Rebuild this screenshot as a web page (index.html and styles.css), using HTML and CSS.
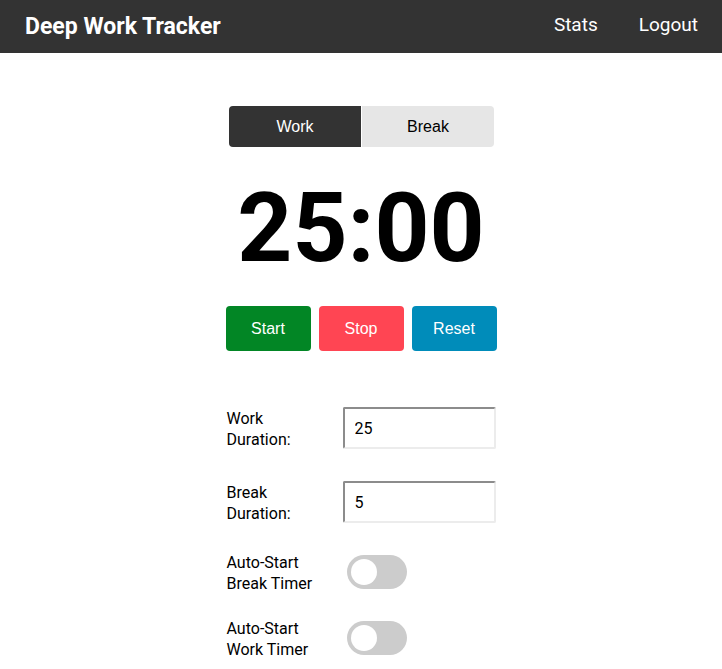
FILE: index.html
```html
<!DOCTYPE html>
<html>
<head>
<meta charset="utf-8">
<link rel="stylesheet" href="styles.css">
</head>
<body>
<header class="topbar">
  <div class="brand">Deep Work Tracker</div>
  <nav class="nav">
    <a class="nav-link" href="#">Stats</a>
    <a class="nav-link" href="#">Logout</a>
  </nav>
</header>
<main class="main">
  <div class="mode-tabs">
    <button class="tab tab-active">Work</button>
    <button class="tab">Break</button>
  </div>
  <div class="timer">25:00</div>
  <div class="controls">
    <button class="ctrl ctrl-start">Start</button>
    <button class="ctrl ctrl-stop">Stop</button>
    <button class="ctrl ctrl-reset">Reset</button>
  </div>
  <div class="settings">
    <div class="row row-input">
      <label class="label">Work<br>Duration:</label>
      <input class="num" type="text" value="25">
    </div>
    <div class="row row-input">
      <label class="label">Break<br>Duration:</label>
      <input class="num" type="text" value="5">
    </div>
    <div class="row">
      <label class="label">Auto-Start<br>Break Timer</label>
      <span class="switch"><span class="knob"></span></span>
    </div>
    <div class="row">
      <label class="label">Auto-Start<br>Work Timer</label>
      <span class="switch"><span class="knob"></span></span>
    </div>
  </div>
</main>
</body>
</html>
```
FILE: styles.css
```css
* { box-sizing: border-box; }
body {
  margin: 0;
  font-family: Roboto, "Liberation Sans", sans-serif;
  color: #000;
  background: #fff;
}
.topbar {
  height: 53px;
  background: #333;
  display: flex;
  align-items: center;
  justify-content: space-between;
  padding: 0 24px 0 25px;
}
.brand {
  color: #fff;
  font-weight: 700;
  font-size: 23px;
}
.nav {
  display: flex;
  gap: 41px;
  margin-bottom: 5px;
}
.nav-link {
  color: #fff;
  text-decoration: none;
  font-size: 19px;
}
.main {
  display: flex;
  flex-direction: column;
  align-items: center;
  padding-top: 53px;
}
.mode-tabs {
  display: flex;
  gap: 1px;
  width: 265px;
  margin-left: 1px;
}
.tab {
  flex: 1;
  height: 41px;
  border: none;
  font-family: "Liberation Sans", Arial, sans-serif;
  font-size: 16px;
  background: #e6e6e6;
  color: #000;
  padding: 0;
}
.tab:first-child { border-radius: 4px 0 0 4px; }
.tab:last-child { border-radius: 0 4px 4px 0; }
.tab-active {
  background: #333;
  color: #fff;
}
.timer {
  font-family: Roboto, sans-serif;
  font-weight: 700;
  font-size: 96px;
  line-height: 117px;
  margin-top: 23px;
  margin-bottom: 19px;
}
.controls {
  display: flex;
  gap: 8px;
}
.ctrl {
  width: 85px;
  height: 45px;
  border: none;
  border-radius: 4px;
  color: #fff;
  font-family: "Liberation Sans", Arial, sans-serif;
  font-size: 16px;
  padding: 0;
}
.ctrl-start { background: #028625; }
.ctrl-stop { background: #ff4553; }
.ctrl-reset { background: #008cba; }
.settings {
  margin-top: 52px;
  width: 270px;
  margin-left: 1px;
  display: flex;
  flex-direction: column;
}
.row {
  display: flex;
  align-items: center;
  margin-bottom: 24px;
}
.row-input { padding: 4px 0; }
.label {
  width: 116px;
  height: 42px;
  font-size: 16px;
  line-height: 21px;
  padding-top: 1px;
}
.num {
  width: 153px;
  height: 42px;
  border: 2px solid #ececec;
  border-top-color: #8c8c8c;
  border-left-color: #8c8c8c;
  border-radius: 2px;
  padding: 0 10px;
  font-family: Roboto, sans-serif;
  font-size: 16px;
  color: #000;
}
.switch {
  position: relative;
  display: inline-block;
  width: 60px;
  height: 34px;
  margin-left: 4px;
  background: #ccc;
  border-radius: 34px;
}
.knob {
  position: absolute;
  left: 4px;
  top: 4px;
  width: 26px;
  height: 26px;
  border-radius: 50%;
  background: #fff;
}
```
